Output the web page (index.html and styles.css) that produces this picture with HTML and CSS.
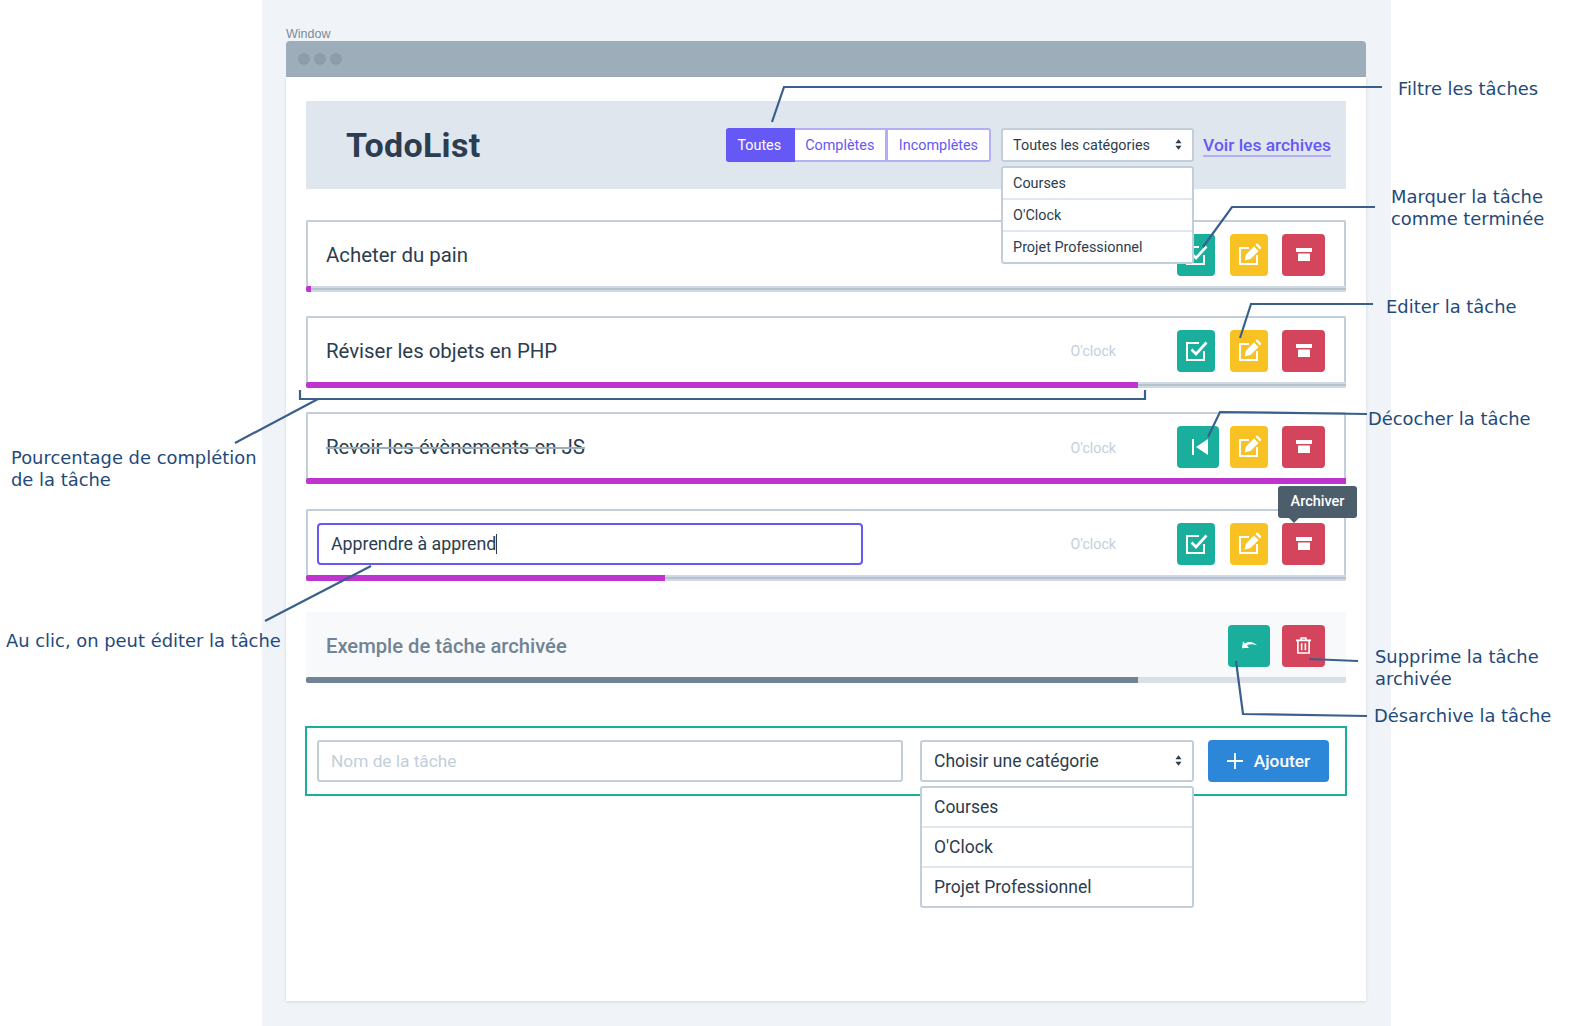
FILE: index.html
```html
<!DOCTYPE html>
<html lang="fr">
<head>
<meta charset="UTF-8">
<title>TodoList - Wireframe</title>
<link rel="stylesheet" href="styles.css">
</head>
<body>
<svg class="defs" width="0" height="0">
  <symbol id="i-check" viewBox="0 0 24 24">
    <path d="M15 4H3v17h17v-9" fill="none" stroke="#fff" stroke-width="2"/>
    <path d="M7.500 10.500l4.500 4.500L22.500 3.500" fill="none" stroke="#fff" stroke-width="2.600"/>
  </symbol>
  <symbol id="i-edit" viewBox="0 0 24 24">
    <path d="M12 5H3v16h17v-9" fill="none" stroke="#fff" stroke-width="2"/>
    <path d="M7.500 17.500l1.500-6 8-8 4.500 4.500-8 8zM18.500 2l1.700-1.700 4.500 4.500-1.700 1.700z" fill="#fff"/>
  </symbol>
  <symbol id="i-archive" viewBox="0 0 16 13">
    <path d="M0 0h16v4H0zM2 5.500h12V13H2z" fill="#fff"/>
  </symbol>
  <symbol id="i-back" viewBox="0 0 16 16">
    <path d="M0 0h2v16H0zM16 0v16L4 8z" fill="#fff"/>
  </symbol>
  <symbol id="i-undo" viewBox="0 0 16 9">
    <path d="M0 7.500L1 0l2.200 2.300C7.500-.3 12.500.6 16 4.500 12.500 2.800 8.500 2.500 5.200 4.300L7.500 7z" fill="#fff"/>
  </symbol>
  <symbol id="i-trash" viewBox="0 0 16 18">
    <path d="M0 3.500h16M2 3.500V17h12V3.500M5.500 3.500V1h5v2.500M6 6.500v7.500M10 6.500v7.500" fill="none" stroke="#fff" stroke-width="1.700"/>
  </symbol>
  <symbol id="i-sort" viewBox="0 0 8 12">
    <path d="M4 0l3.500 4.500h-7zM4 12L.5 7.500h7z" fill="#2b3d4f"/>
  </symbol>
</svg>

<div class="panel">
  <div class="window-label">Window</div>
  <div class="window-bar">
    <span class="dot"></span><span class="dot"></span><span class="dot"></span>
  </div>
  <div class="window">

    <header class="top">
      <h1>TodoList</h1>
      <div class="filters">
        <button class="filter filter-active">Toutes</button>
        <button class="filter">Complètes</button>
        <button class="filter">Incomplètes</button>
      </div>
      <div class="select select-small">
        Toutes les catégories
        <svg class="sort"><use href="#i-sort"/></svg>
        <ul class="menu menu-small">
          <li>Courses</li>
          <li>O'Clock</li>
          <li>Projet Professionnel</li>
        </ul>
      </div>
      <a class="archives" href="#">Voir les archives</a>
    </header>

    <div class="task">
      <div class="task-body">
        <span class="task-name">Acheter du pain</span>
        <button class="act act-green"><svg class="ic"><use href="#i-check"/></svg></button>
        <button class="act act-yellow"><svg class="ic"><use href="#i-edit"/></svg></button>
        <button class="act act-red"><svg class="ic-arch"><use href="#i-archive"/></svg></button>
      </div>
      <div class="track"><div class="fill" style="width:0.5%"></div></div>
    </div>

    <div class="task">
      <div class="task-body">
        <span class="task-name">Réviser les objets en PHP</span>
        <span class="task-cat">O'clock</span>
        <button class="act act-green"><svg class="ic"><use href="#i-check"/></svg></button>
        <button class="act act-yellow"><svg class="ic"><use href="#i-edit"/></svg></button>
        <button class="act act-red"><svg class="ic-arch"><use href="#i-archive"/></svg></button>
      </div>
      <div class="track"><div class="fill" style="width:80%"></div></div>
    </div>

    <div class="task">
      <div class="task-body">
        <span class="task-name task-done">Revoir les évènements en JS</span>
        <span class="task-cat">O'clock</span>
        <button class="act act-green act-wide"><svg class="ic-back"><use href="#i-back"/></svg></button>
        <button class="act act-yellow"><svg class="ic"><use href="#i-edit"/></svg></button>
        <button class="act act-red"><svg class="ic-arch"><use href="#i-archive"/></svg></button>
      </div>
      <div class="track"><div class="fill" style="width:100%"></div></div>
    </div>

    <div class="task">
      <div class="task-body task-body-edit">
        <div class="edit-field">Apprendre à apprend<span class="caret"></span></div>
        <span class="task-cat">O'clock</span>
        <button class="act act-green"><svg class="ic"><use href="#i-check"/></svg></button>
        <button class="act act-yellow"><svg class="ic"><use href="#i-edit"/></svg></button>
        <button class="act act-red">
          <svg class="ic-arch"><use href="#i-archive"/></svg>
          <span class="tooltip">Archiver</span>
        </button>
      </div>
      <div class="track"><div class="fill" style="width:34.500%"></div></div>
    </div>

    <div class="task-archived">
      <div class="task-body">
        <span class="task-name">Exemple de tâche archivée</span>
        <button class="act act-green act-wide"><svg class="ic-undo"><use href="#i-undo"/></svg></button>
        <button class="act act-red"><svg class="ic-trash"><use href="#i-trash"/></svg></button>
      </div>
      <div class="track track-light"><div class="fill fill-gray" style="width:80%"></div></div>
    </div>

    <form class="add-form">
      <input class="add-input" type="text" placeholder="Nom de la tâche">
      <div class="select select-big">
        Choisir une catégorie
        <svg class="sort"><use href="#i-sort"/></svg>
        <ul class="menu menu-big">
          <li>Courses</li>
          <li>O'Clock</li>
          <li>Projet Professionnel</li>
        </ul>
      </div>
      <button class="add-btn" type="button">
        <svg class="ic-plus" viewBox="0 0 16 16"><path d="M8 0v16M0 8h16" stroke="#fff" stroke-width="1.800"/></svg>
        Ajouter
      </button>
    </form>

  </div>
</div>

<!-- annotations du wireframe -->
<svg class="lines" width="1571" height="1026">
  <polyline points="772,122 784,87 1382,87"/>
  <polyline points="1203,247 1232,207 1375,207"/>
  <polyline points="1240,338 1251,304 1373,304"/>
  <polyline points="1208,437 1220,412 1367,414"/>
  <polyline points="300,390 300,399 1145,399 1145,390"/>
  <polyline points="318,399 235,443"/>
  <polyline points="371,566 265,621"/>
  <polyline points="1309,659 1358,661"/>
  <polyline points="1236,661 1243,714 1367,716"/>
</svg>

<p class="note note-filter">Filtre les tâches</p>
<p class="note note-mark">Marquer la tâche<br>comme terminée</p>
<p class="note note-edit">Editer la tâche</p>
<p class="note note-uncheck">Décocher la tâche</p>
<p class="note note-percent">Pourcentage de complétion<br>de la tâche</p>
<p class="note note-click">Au clic, on peut éditer la tâche</p>
<p class="note note-delete">Supprime la tâche<br>archivée</p>
<p class="note note-restore">Désarchive la tâche</p>

</body>
</html>
```

FILE: styles.css
```css
* {
  box-sizing: border-box;
}

html, body {
  margin: 0;
  height: 1026px;
  overflow: hidden;
  background-color: white;
}

body {
  position: relative;
  font-family: Roboto, "Noto Sans", sans-serif;
  color: #2b3d4f;
}

.defs {
  position: absolute;
}

.panel {
  margin-left: 262px;
  width: 1129px;
  height: 1026px;
  padding: 27px 25px 25px 24px;
  background-color: #f0f4f8;
  display: flex;
  flex-direction: column;
}

.window-label {
  font-family: "Liberation Sans", sans-serif;
  font-size: 12.500px;
  line-height: 14px;
  color: #7b8a99;
}

.window-bar {
  height: 36px;
  flex: none;
  background-color: #9eadba;
  border-radius: 4px 4px 0 0;
  display: flex;
  align-items: center;
  gap: 4px;
  padding-left: 12px;
}

.dot {
  width: 12px;
  height: 12px;
  border-radius: 50%;
  background-color: #8d9dab;
}

.window {
  flex: 1;
  background-color: white;
  padding: 24px 20px;
  box-shadow: 0 1px 3px rgba(43, 61, 79, 0.15);
}

/* En-tete */
.top {
  height: 88px;
  margin-bottom: 31px;
  padding: 0 15px 0 40px;
  background-color: #dfe6ee;
  display: flex;
  align-items: center;
}

h1 {
  margin: 0 auto 0 0;
  font-size: 34px;
  font-weight: 700;
  letter-spacing: 0.3px;
}

.filters {
  display: flex;
  flex: none;
}

.filter {
  height: 34px;
  padding: 0 10.500px;
  font-family: inherit;
  font-size: 14.400px;
  color: #6658f5;
  background-color: white;
  border: 2px solid #b4aef5;
  border-left-width: 0;
}

.filter:last-child {
  padding: 0 11px;
  border-radius: 0 3px 3px 0;
  border-left-width: 2px;
  margin-left: -1px;
}

.filter-active {
  padding: 0 11.500px;
  color: white;
  background-color: #6658f5;
  border-color: #6658f5;
  border-radius: 3px 0 0 3px;
}

.select {
  position: relative;
  flex: none;
  display: flex;
  align-items: center;
  background-color: white;
  border: 2px solid #c2cfdb;
  border-radius: 3px;
}

.select-small {
  width: 193px;
  height: 34px;
  margin: 0 9px 0 10px;
  padding-left: 10px;
  font-size: 14.400px;
}

.select-big {
  width: 274px;
  height: 42px;
  margin-left: 17px;
  padding-left: 12px;
  font-size: 17.500px;
}

.sort {
  position: absolute;
  right: 10px;
  top: 50%;
  width: 7px;
  height: 11px;
  margin-top: -6px;
}

.menu {
  position: absolute;
  left: -2px;
  right: -2px;
  margin: 0;
  padding: 0;
  list-style: none;
  background-color: white;
  border: 2px solid #c2cfdb;
  border-radius: 3px;
  z-index: 5;
}

.menu li {
  display: flex;
  align-items: center;
  border-bottom: 2px solid #e1e7ef;
}

.menu li:last-child {
  border-bottom: 0;
}

.menu-small {
  top: 36px;
}

.menu-small li {
  height: 32px;
  padding-left: 10px;
}

.menu-small li:last-child {
  height: 30px;
}

.menu-big {
  top: 44px;
}

.menu-big li {
  height: 40px;
  padding-left: 12px;
}

.menu-big li:last-child {
  height: 38px;
}

.archives {
  flex: none;
  margin-top: 2px;
  font-size: 17.400px;
  font-weight: 500;
  color: #6658f5;
  text-decoration: none;
  border-bottom: 2px solid #b4aef5;
}

/* Taches */
.task {
  margin-bottom: 24px;
  border: 2px solid #c2cfdb;
  border-bottom: 0;
  border-radius: 2px;
}

.task:nth-of-type(3) {
  margin-bottom: 25px;
}

.task:nth-of-type(4) {
  margin-bottom: 31px;
}

.task-body {
  height: 64px;
  padding: 1px 19px 0 18px;
  display: flex;
  align-items: center;
}

.task-body-edit {
  padding-left: 9px;
}

.task-name {
  margin-right: auto;
  font-size: 20.400px;
}

.task-done {
  position: relative;
}

.task-done::after {
  content: "";
  position: absolute;
  left: 0;
  right: 0;
  top: 12px;
  height: 2px;
  background-color: #9eadba;
}

.task-done + .task-cat {
  margin-top: 3px;
}

.task-cat {
  margin-right: 61px;
  font-size: 14.200px;
  color: #c2cfdb;
}

.act {
  position: relative;
  flex: none;
  width: 38px;
  height: 42px;
  margin-left: 15px;
  padding: 0;
  border: 0;
  border-radius: 4px;
  display: flex;
  align-items: center;
  justify-content: center;
}

.act:first-of-type {
  margin-left: 0;
}

.act-green {
  background-color: #1aaf9c;
}

.act-wide {
  width: 42px;
  margin-right: -4px;
}

.act-yellow {
  background-color: #f9c224;
}

.act-red {
  width: 43px;
  margin-left: 14px;
  background-color: #d4445c;
}

.ic {
  width: 24px;
  height: 24px;
}

.ic-arch {
  width: 16px;
  height: 13px;
}

.ic-back {
  width: 16px;
  height: 16px;
  margin-left: 3px;
}

.ic-undo {
  width: 15px;
  height: 9px;
}

.ic-trash {
  width: 15px;
  height: 17px;
}

.tooltip {
  position: absolute;
  left: -4px;
  top: -37px;
  width: 79px;
  height: 32px;
  border-radius: 3px;
  background-color: #4c5d6c;
  color: white;
  font-family: Roboto, sans-serif;
  font-size: 14.500px;
  font-weight: 500;
  display: flex;
  align-items: center;
  justify-content: center;
}

.tooltip::after {
  content: "";
  position: absolute;
  left: 11px;
  bottom: -5px;
  border: 5px solid transparent;
  border-bottom: 0;
  border-top-color: #4c5d6c;
}

.track {
  position: relative;
  height: 6px;
  margin: 0 -2px;
  background-color: #d0d9e2;
  border-radius: 0 0 2px 2px;
}

.track::before {
  content: "";
  position: absolute;
  left: 0;
  right: 0;
  top: 2px;
  height: 2px;
  background-color: #b6c2ce;
}

.fill {
  position: relative;
  height: 6px;
  background-color: #bf33cf;
  border-radius: 2px 0 0 2px;
}

.edit-field {
  width: 546px;
  height: 42px;
  padding-left: 12px;
  margin-right: auto;
  display: flex;
  align-items: center;
  font-size: 17.800px;
  border: 2px solid #6658f5;
  border-radius: 4px;
}

.caret {
  width: 1px;
  height: 20px;
  background-color: #2b3d4f;
}

.task-archived {
  margin-bottom: 43px;
  color: #718394;
  background-color: #f7f9fb;
}

.task-archived .task-body {
  height: 65px;
  padding: 2px 21px 0 20px;
}

.task-archived .task-name {
  font-weight: 500;
  font-size: 20.200px;
}

.task-archived .act-wide {
  margin-right: -2px;
}

.task-archived .track {
  margin: 0;
  background-color: #d9dfe5;
}

.task-archived .track::before {
  display: none;
}

.task-archived .fill-gray {
  background-color: #718394;
}

/* Formulaire d'ajout */
.add-form {
  height: 70px;
  margin: 0 -1px;
  padding: 0 18px 0 10px;
  border: 2px solid #1aaf9c;
  display: flex;
  align-items: center;
}

.add-input {
  flex: none;
  width: 586px;
  height: 42px;
  padding-left: 12px;
  font-family: inherit;
  font-size: 17.300px;
  border: 2px solid #c2cfdb;
  border-radius: 3px;
}

.add-input::placeholder {
  color: #c2cfdb;
}

.add-btn {
  flex: none;
  width: 121px;
  height: 42px;
  margin-left: 14px;
  border: 0;
  border-radius: 4px;
  background-color: #2d87d9;
  color: white;
  font-family: inherit;
  font-size: 17.300px;
  font-weight: 500;
  display: flex;
  align-items: center;
  justify-content: center;
  gap: 11px;
}

.ic-plus {
  width: 16px;
  height: 16px;
}

/* Annotations */
.lines {
  position: absolute;
  left: 0;
  top: 0;
  z-index: 10;
  pointer-events: none;
}

.lines polyline {
  fill: none;
  stroke: #3a5f8a;
  stroke-width: 2.200;
}

.note {
  position: absolute;
  margin: 0;
  font-family: "DejaVu Sans", sans-serif;
  font-size: 17.900px;
  line-height: 22px;
  color: #1f4a7a;
  z-index: 11;
  white-space: nowrap;
}

.note-filter {
  left: 1398px;
  top: 78px;
}

.note-mark {
  left: 1391px;
  top: 186px;
}

.note-edit {
  left: 1386px;
  top: 296px;
}

.note-uncheck {
  left: 1368px;
  top: 408px;
}

.note-percent {
  left: 11px;
  top: 447px;
}

.note-click {
  left: 6px;
  top: 630px;
}

.note-delete {
  left: 1375px;
  top: 646px;
}

.note-restore {
  left: 1374px;
  top: 705px;
}
```
